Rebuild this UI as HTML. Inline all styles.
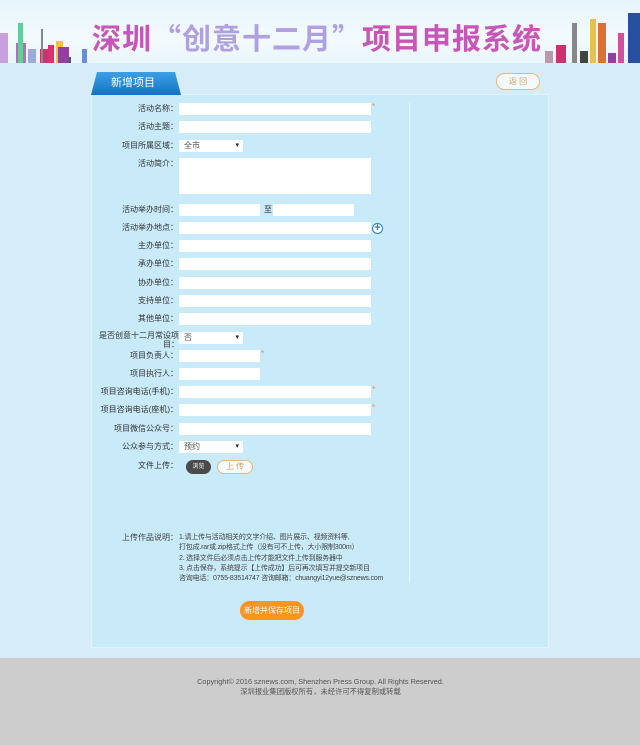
<!DOCTYPE html>
<html><head><meta charset="utf-8"><style>
*{margin:0;padding:0;box-sizing:border-box}
body{width:640px;height:745px;background:#d6edf9;font-family:"Liberation Sans","Noto Sans CJK SC",sans-serif;font-size:8px;color:#333;position:relative;overflow:hidden}
.hdr{position:absolute;left:0;top:0;width:640px;height:63px;background:linear-gradient(#e6f5fc,#f3fafd 60%,#eaf6fb)}
.title{position:absolute;left:92px;top:16px;font-size:29px;font-weight:bold;letter-spacing:1px;color:#c855b8;white-space:nowrap;font-family:"Noto Sans CJK SC",sans-serif}
.title span{color:#b0a0e0}
.b{position:absolute;bottom:0}
.panel{position:absolute;left:91px;top:94px;width:458px;height:554px;background:#c8eaf9;border:1px solid #e0f3fc}
.tab{position:absolute;left:91px;top:72px;width:90px;height:23px;background:linear-gradient(#3da0e6,#1372c4);clip-path:polygon(6px 0,84px 0,90px 23px,0 23px);color:#fff;font-size:11px;line-height:23px;padding-left:20px}
.back{position:absolute;left:496px;top:73px;width:44px;height:17px;border:1px solid #e8b878;border-radius:9px;color:#d8a060;text-align:center;line-height:15px;font-size:8px;background:#f3fafd}
.div{position:absolute;left:409px;top:103px;width:1px;height:480px;background:#e8f6fd}
.l{position:absolute;right:462px;text-align:right;white-space:nowrap;line-height:12px}
.i{position:absolute;left:179px;width:192px;height:12px;background:#fff}
.s{width:64px;padding-left:5px;line-height:12px;color:#555}
.s:after{content:"▾";position:absolute;right:4px;top:0;font-size:7px;color:#222}
.st{position:absolute;left:372px;color:#e8904a;font-size:8px}
.note{position:absolute;left:179px;top:533px;line-height:10.3px;font-size:7px;color:#444;letter-spacing:-0.2px}
.save{position:absolute;left:240px;top:601px;width:64px;height:19px;border-radius:10px;background:#fb9420;color:#fff;text-align:center;line-height:19px;font-size:8px}
.foot{position:absolute;left:0;top:658px;width:640px;height:87px;background:#cdcdcd;text-align:center;color:#555;font-size:7.3px;line-height:10px;padding-top:19px;padding-left:1px}
</style></head><body>
<div class="hdr">
<div class="b" style="left:0;width:8px;height:30px;background:#c8a0e0"></div>
<div class="b" style="left:16px;width:10px;height:20px;background:#b070c0"></div>
<div class="b" style="left:28px;width:8px;height:14px;background:#9ad"></div>
<div class="b" style="left:40px;width:8px;height:14px;background:#d33070"></div>
<div class="b" style="left:48px;width:6px;height:18px;background:#e03070"></div>
<div class="b" style="left:18px;width:5px;height:40px;background:#6c9"></div>
<div class="b" style="left:41px;width:2px;height:34px;background:#888"></div>
<div class="b" style="left:56px;width:7px;height:22px;background:#f3c040"></div>
<div class="b" style="left:66px;width:5px;height:6px;background:#555"></div>
<div class="b" style="left:58px;width:11px;height:16px;background:#9040a0"></div>
<div class="b" style="left:82px;width:5px;height:14px;background:#6a8fd0"></div>
<div class="title">深圳<span>“创意十二月”</span>项目申报系统</div>
<div class="b" style="left:545px;width:8px;height:12px;background:#b9a"></div>
<div class="b" style="left:556px;width:10px;height:18px;background:#d03070"></div>
<div class="b" style="left:572px;width:5px;height:40px;background:#888"></div>
<div class="b" style="left:580px;width:8px;height:12px;background:#444"></div>
<div class="b" style="left:590px;width:6px;height:44px;background:#e8c050"></div>
<div class="b" style="left:598px;width:8px;height:40px;background:#e07030"></div>
<div class="b" style="left:608px;width:8px;height:10px;background:#9040a0"></div>
<div class="b" style="left:618px;width:6px;height:30px;background:#d050a0"></div>
<div class="b" style="left:628px;width:12px;height:50px;background:#2850a0"></div>
</div>
<div class="panel"></div>
<div class="tab">新增项目</div>
<div class="back">返 回</div>
<div class="div"></div>

<div class="l" style="top:103px">活动名称：</div><div class="i" style="top:103px"></div><div class="st" style="top:102px">*</div>
<div class="l" style="top:121px">活动主题：</div><div class="i" style="top:121px"></div>
<div class="l" style="top:140px">项目所属区域：</div><div class="i s" style="top:140px">全市</div>
<div class="l" style="top:158px">活动简介：</div><div class="i" style="top:158px;height:36px"></div>
<div class="l" style="top:204px">活动举办时间：</div><div class="i" style="top:204px;width:81px"></div><div style="position:absolute;left:264px;top:204px;line-height:12px">至</div><div class="i" style="top:204px;left:273px;width:81px"></div>
<div class="l" style="top:222px">活动举办地点：</div><div class="i" style="top:222px"></div>
<div style="position:absolute;left:372px;top:223px;width:11px;height:11px;border-radius:50%;background:#fff;border:1px solid #2a7cc8;color:#2a7cc8;font-size:11px;line-height:8px;text-align:center;font-weight:bold">+</div>
<div class="l" style="top:240px">主办单位：</div><div class="i" style="top:240px"></div>
<div class="l" style="top:258px">承办单位：</div><div class="i" style="top:258px"></div>
<div class="l" style="top:277px">协办单位：</div><div class="i" style="top:277px"></div>
<div class="l" style="top:295px">支持单位：</div><div class="i" style="top:295px"></div>
<div class="l" style="top:313px">其他单位：</div><div class="i" style="top:313px"></div>
<div class="l" style="top:331px;line-height:9px;right:461px;width:80px;text-align:right;white-space:normal">是否创意十二月常设项<br>目：</div><div class="i s" style="top:332px">否</div>
<div class="l" style="top:350px">项目负责人：</div><div class="i" style="top:350px;width:81px"></div><div class="st" style="top:349px;left:261px">*</div>
<div class="l" style="top:368px">项目执行人：</div><div class="i" style="top:368px;width:81px"></div>
<div class="l" style="top:386px">项目咨询电话(手机)：</div><div class="i" style="top:386px"></div><div class="st" style="top:385px">*</div>
<div class="l" style="top:404px">项目咨询电话(座机)：</div><div class="i" style="top:404px"></div><div class="st" style="top:403px">*</div>
<div class="l" style="top:423px">项目微信公众号：</div><div class="i" style="top:423px"></div>
<div class="l" style="top:441px">公众参与方式：</div><div class="i s" style="top:441px">预约</div>
<div class="l" style="top:460px">文件上传：</div>
<div style="position:absolute;left:186px;top:460px;width:25px;height:14px;border-radius:7px;background:#4a4a4a;color:#fff;font-size:6px;line-height:14px;text-align:center">浏览</div>
<div style="position:absolute;left:217px;top:460px;width:36px;height:14px;border-radius:7px;border:1px solid #e8b878;color:#d8a060;font-size:8px;line-height:12px;text-align:center;background:#f5fbfe">上 传</div>

<div class="l" style="top:533px;line-height:10px;color:#444">上传作品说明：</div>
<div class="note">1.请上传与活动相关的文字介绍、图片展示、视频资料等,<br>打包成.rar或.zip格式上传（没有可不上传，大小限制300m）<br>2. 选择文件后必须点击上传才能把文件上传到服务器中<br>3. 点击保存，系统提示【上传成功】后可再次填写并提交新项目<br>咨询电话：0755-83514747 咨询邮箱：chuangyi12yue@sznews.com</div>
<div class="save">新增并保存项目</div>
<div class="foot">Copyright© 2016 sznews.com, Shenzhen Press Group. All Rights Reserved.<br>深圳报业集团版权所有，未经许可不得复制或转载</div>
</body></html>
